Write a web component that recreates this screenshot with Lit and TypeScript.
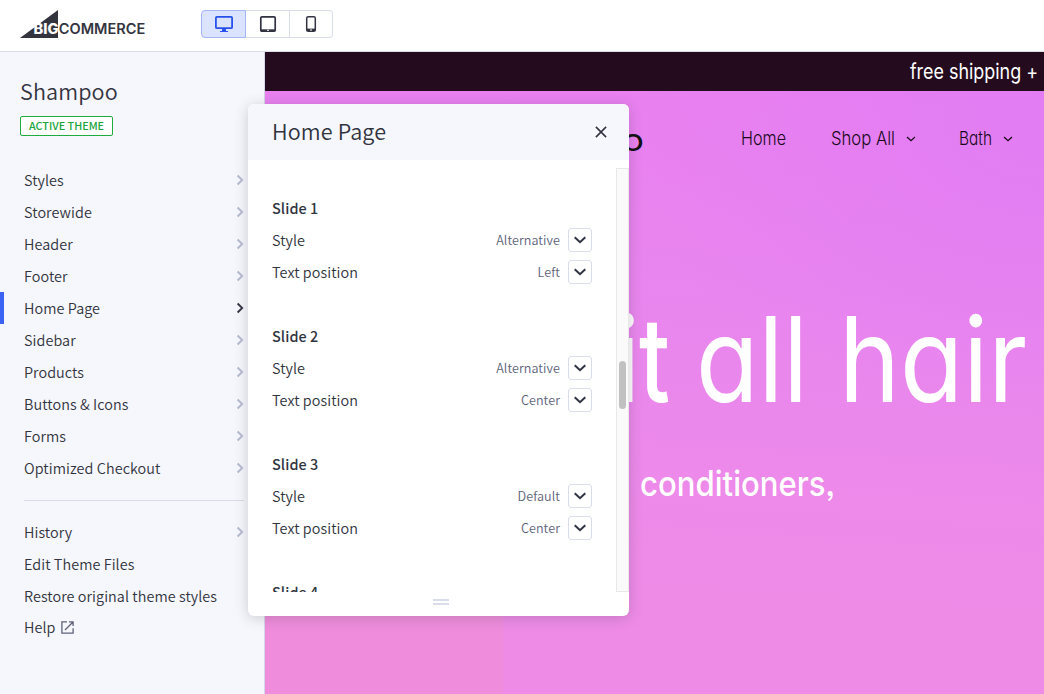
import { LitElement, html, css, svg } from "lit";
import { customElement, property } from "lit/decorators.js";
import { classMap } from "lit/directives/class-map.js";

const NAV = ["Styles", "Storewide", "Header", "Footer", "Home Page", "Sidebar", "Products", "Buttons & Icons", "Forms", "Optimized Checkout"];

interface Slide { title: string; fields: [string, string][]; }

const SLIDES: Slide[] = [
  { title: "Slide 1", fields: [["Style", "Alternative"], ["Text position", "Left"]] },
  { title: "Slide 2", fields: [["Style", "Alternative"], ["Text position", "Center"]] },
  { title: "Slide 3", fields: [["Style", "Default"], ["Text position", "Center"]] },
  { title: "Slide 4", fields: [] },
];

/** One line of display type set to an exact measure. */
@customElement("display-text")
export class DisplayText extends LitElement {
  @property() text = "";
  @property({ type: Number }) size = 20;
  @property({ type: Number }) measure = 100;
  @property({ type: Number }) weight = 400;

  static styles = css`
    :host { display: block; }
    .line { display: block; overflow: visible; }
    .glyphs { font-family: Inter, "Open Sans", sans-serif; font-feature-settings: "cv11", "ss03"; fill: currentColor; }
  `;

  render() {
    const h = Math.round(this.size * 1.2);
    return html`<svg class="line" width=${this.measure} height=${h}>
      ${svg`<text class="glyphs" x="0" y=${Math.round(this.size)} font-size=${this.size} font-weight=${this.weight}
        textLength=${this.measure} lengthAdjust="spacingAndGlyphs">${this.text}</text>`}
    </svg>`;
  }
}

@customElement("editor-header")
export class EditorHeader extends LitElement {
  static styles = css`
    :host { display: flex; height: 51px; background: #fff; border-bottom: 1px solid #d9dce9; flex: none; }
    .logo { width: 130px; height: 40px; margin-left: 18px; flex: none; }
    .word { font-family: Inter, "Open Sans", sans-serif; font-weight: 600; font-size: 14px; }
    .big { font-weight: 800; }
    .devices { display: flex; margin: 10px 0 0 53px; height: 28px; width: 132px; }
    .device { box-sizing: border-box; width: 44px; border: 1px solid #d9dce9; border-left-width: 0; display: flex; align-items: center; justify-content: center; color: #313440; }
    .device:first-child { width: 45px; border: 1px solid #a5b5fa; background: #dbe3fe; border-radius: 4px 0 0 4px; color: #2852eb; }
    .device:last-child { border-radius: 0 4px 4px 0; width: 43px; }
    .icon { display: block; }
  `;

  render() {
    return html`
      <svg class="logo" viewBox="18 0 130 40">
        <path d="M20 38 58 10V38Z" fill="#34343f" />
        <text class="word big" x="33.5" y="34" fill="#fff" textLength="25" lengthAdjust="spacingAndGlyphs">BIG</text>
        <text class="word" x="58.8" y="34" fill="#34343f" textLength="86.5" lengthAdjust="spacingAndGlyphs">COMMERCE</text>
      </svg>
      <div class="devices">
        <div class="device">
          <svg class="icon" width="20" height="18" viewBox="0 0 20 18" fill="none" stroke="currentColor">
            <rect x="1.9" y="1.9" width="16.2" height="11.3" rx="1" stroke-width="1.8" />
            <path d="M8 13.5h4v2.6h2V17H6v-.9h2Z" fill="currentColor" stroke="none" />
          </svg>
        </div>
        <div class="device">
          <svg class="icon" width="18" height="18" viewBox="0 0 18 18" fill="none" stroke="currentColor">
            <rect x="1.8" y="1.8" width="14.4" height="14.4" rx="1.2" stroke-width="1.7" />
            <path d="M1.5 14.3h15v2h-15z" fill="currentColor" stroke="none" /><path d="M8 15.3h2" stroke="#fff" />
          </svg>
        </div>
        <div class="device">
          <svg class="icon" width="12" height="18" viewBox="0 0 12 18" fill="none" stroke="currentColor">
            <rect x="1.7" y="1.7" width="8.6" height="14.6" rx="1.6" stroke-width="1.5" />
            <path d="M1.5 13.6h9v2.4h-9z" fill="currentColor" stroke="none" /><path d="M5 15h2" stroke="#fff" />
          </svg>
        </div>
      </div>`;
  }
}

@customElement("theme-sidebar")
export class ThemeSidebar extends LitElement {
  static styles = css`
    :host { display: block; box-sizing: border-box; width: 265px; flex: none; background: #f6f7fc; border-right: 1px solid #d3d8e8; color: #313440; font: 350 14.4px/32px "Noto Sans CJK JP", "Noto Sans", sans-serif; letter-spacing: 0.07px; }
    .head { box-sizing: border-box; padding: 23px 0 0 20px; height: 88px; }
    .name { font-size: 21.6px; line-height: 32px; letter-spacing: 0.12px; color: #34343f; }
    .badge { display: inline-block; box-sizing: border-box; height: 20px; width: 93px; margin-top: 9px; border: 1px solid #20ab3e; border-radius: 2px; background: #fff; color: #20a53c; font-size: 10.8px; font-weight: 500; line-height: 17px; letter-spacing: 0; text-align: center; vertical-align: top; }
    .item { display: flex; align-items: center; justify-content: space-between; box-sizing: border-box; height: 32px; padding: 0 20px 0 20px; border-left: 4px solid transparent; white-space: nowrap; }
    .item.active { border-left-color: #3c64f4; }
    .chev { color: #b4bad1; }
    .active .chev { color: #313440; }
    .rule { height: 1px; background: #d9dce9; margin: 16px 20px 15px 24px; }
    .ext { margin: 1px 0 0 6px; color: #5e637a; }
    .help { justify-content: flex-start; height: 30px; }
    .list { margin-top: 24px; }
  `;

  private chevron() {
    return html`<svg class="chev" width="8" height="12" viewBox="0 0 8 12" fill="none" stroke="currentColor" stroke-width="1.8"><path d="M1.6 1.5 6.2 6 1.6 10.5" /></svg>`;
  }

  render() {
    return html`
      <div class="head">
        <div class="name">Shampoo</div>
        <div class="badge">ACTIVE THEME</div>
      </div>
      <div class="list">
        ${NAV.map((n) => html`<div class=${classMap({ item: true, active: n === "Home Page" })}><span>${n}</span>${this.chevron()}</div>`)}
      </div>
      <div class="rule"></div>
      <div class="item"><span>History</span>${this.chevron()}</div>
      <div class="item"><span>Edit Theme Files</span></div>
      <div class="item"><span>Restore original theme styles</span></div>
      <div class="item help"><span>Help</span>
        <svg class="ext" width="13" height="13" viewBox="0 0 13 13" fill="none" stroke="currentColor" stroke-width="1.3"><path d="M6 .9H.9v11.2h11.2V7.2M8 .9h4.1V5M12 1 4 9" /></svg>
      </div>`;
  }
}

@customElement("settings-panel")
export class SettingsPanel extends LitElement {
  static styles = css`
    :host { display: flex; flex-direction: column; border-radius: 6px; overflow: hidden; background: #fff; color: #313440; font: 350 14.4px/32px "Noto Sans CJK JP", "Noto Sans", sans-serif; letter-spacing: 0.07px; }
    .head { flex: none; display: flex; align-items: center; justify-content: space-between; height: 56px; padding: 0 22px 0 24px; background: #f6f7fc; }
    .heading { font-size: 21.6px; letter-spacing: 0.1px; line-height: 30px; padding-bottom: 2px; }
    .body { display: flex; flex: none; height: 424px; margin-top: 8px; overflow: hidden; }
    .slides { flex: 1; padding: 24px 24px 0; }
    .group { height: 128px; }
    .title { font-weight: 500; height: 32px; }
    .row { display: flex; align-items: center; height: 32px; }
    .label { flex: 1; }
    .value { font-size: 12.6px; color: #5e637a; }
    .pick { box-sizing: border-box; width: 24px; height: 24px; margin-left: 8px; border: 1px solid #d9dce9; border-radius: 3px; display: flex; align-items: center; justify-content: center; }
    .track { box-sizing: border-box; width: 13px; border: 1px solid #e8e8e8; background: #fafafa; }
    .thumb { width: 7px; height: 48px; margin: 192px 0 0 2px; border-radius: 4px; background: #c1c1c1; }
    .grip { width: 16px; height: 2px; border: solid #d9dce9; border-width: 2px 0; margin: 7px 0 0 185px; flex: none; }
  `;

  private field(label: string, value: string) {
    return html`<div class="row"><span class="label">${label}</span><span class="value">${value}</span>
      <span class="pick"><svg width="14" height="10" viewBox="0 0 14 10" fill="none" stroke="#313440" stroke-width="2"><path d="M1.7 2.2 7 7.2 12.3 2.2" /></svg></span></div>`;
  }

  render() {
    return html`
      <div class="head"><span class="heading">Home Page</span>
        <svg width="12" height="12" viewBox="0 0 12 12" stroke="#313440" stroke-width="1.6"><path d="M.9.9 11.1 11.1M11.1.9.9 11.1" /></svg>
      </div>
      <div class="body">
        <div class="slides">
          ${SLIDES.map((s) => html`<div class="group"><div class="title">${s.title}</div>${s.fields.map(([k, v]) => this.field(k, v))}</div>`)}
        </div>
        <div class="track"><div class="thumb"></div></div>
      </div>
      <div class="grip"></div>`;
  }
}

@customElement("store-preview")
export class StorePreview extends LitElement {
  static styles = css`
    :host { display: flex; flex-direction: column; flex: 1; min-width: 0; overflow: hidden; }
    .promo { flex: none; box-sizing: border-box; height: 39px; background: #240c1e; color: #fff; display: flex; justify-content: flex-end; padding: 6px 6px 0 0; }
    .hero {
      flex: 1; color: #fff; overflow: hidden;
      background:
        linear-gradient(#ef8ddc, #ef8ddc) left bottom / 238px 120px no-repeat,
        radial-gradient(ellipse 420px 300px at 100% 4%, rgba(225, 124, 244, 0.9) 0%, rgba(230, 126, 242, 0) 100%),
        linear-gradient(184deg, #e980f0 0%, #e986ee 38%, #ee8be8 75%, #ee8be6 100%);
    }
    .bar { display: flex; height: 100px; box-sizing: border-box; padding: 35px 0 0 357px; color: #18081a; }
    .brand { color: #111; margin-top: -6px; width: 119px; }
    .link { display: flex; }
    .arrow { margin: 10px 0 0 11px; }
    .shop { margin-left: 45px; }
    .bath { margin-left: 43px; }
    .title { display: flex; height: 142px; box-sizing: border-box; padding: 93px 0 0 351px; }
    .all { margin-left: 26px; }
    .hair { margin-left: 31px; }
    .sub { padding: 128px 0 0 375px; }
  `;

  private arrow() {
    return html`<svg class="arrow" width="10" height="6" viewBox="0 0 10 6" fill="none" stroke="currentColor" stroke-width="1.3"><path d="M1 1 5 4.7 9 1" /></svg>`;
  }

  render() {
    return html`
      <div class="promo"><display-text text="free shipping +" size="21" measure="128" weight="400"></display-text></div>
      <div class="hero">
        <div class="bar">
          <div class="brand"><display-text text="o" size="31" measure="22" weight="400"></display-text></div>
          <div class="link"><display-text text="Home" size="18.5" measure="45" weight="300"></display-text></div>
          <div class="link shop"><display-text text="Shop All" size="18.5" measure="64" weight="300"></display-text>${this.arrow()}</div>
          <div class="link bath"><display-text text="Bath" size="18.5" measure="33" weight="300"></display-text>${this.arrow()}</div>
        </div>
        <div class="title">
          <display-text text="it" size="118" measure="54" weight="500"></display-text>
          <display-text class="all" text="all" size="118" measure="112" weight="400"></display-text>
          <display-text class="hair" text="hair" size="118" measure="188" weight="400"></display-text>
        </div>
        <div class="sub"><display-text text="conditioners," size="35" measure="195" weight="450"></display-text></div>
      </div>`;
  }
}

@customElement("app-root")
export class AppRoot extends LitElement {
  static styles = css`
    :host { display: flex; flex-direction: column; position: relative; height: 694px; overflow: hidden; background: #fff; }
    .main { display: flex; flex: 1; min-height: 0; }
    .panel { position: absolute; left: 248px; top: 104px; width: 381px; height: 512px; box-shadow: 0 2px 14px rgba(49, 52, 64, 0.22); }
  `;

  render() {
    return html`
      <editor-header></editor-header>
      <div class="main"><theme-sidebar></theme-sidebar><store-preview></store-preview></div>
      <settings-panel class="panel"></settings-panel>`;
  }
}
